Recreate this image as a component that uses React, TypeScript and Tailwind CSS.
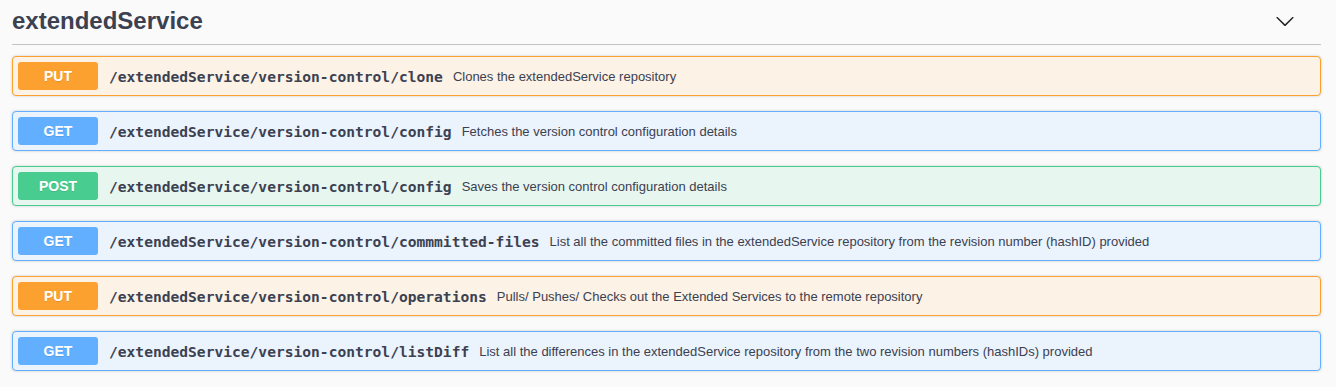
const ops = [
  { method: "PUT", path: "/extendedService/version-control/clone", desc: "Clones the extendedService repository" },
  { method: "GET", path: "/extendedService/version-control/config", desc: "Fetches the version control configuration details" },
  { method: "POST", path: "/extendedService/version-control/config", desc: "Saves the version control configuration details" },
  {
    method: "GET",
    path: "/extendedService/version-control/commmitted-files",
    desc: "List all the committed files in the extendedService repository from the revision number (hashID) provided",
  },
  {
    method: "PUT",
    path: "/extendedService/version-control/operations",
    desc: "Pulls/ Pushes/ Checks out the Extended Services to the remote repository",
  },
  {
    method: "GET",
    path: "/extendedService/version-control/listDiff",
    desc: "List all the differences in the extendedService repository from the two revision numbers (hashIDs) provided",
  },
];

const styles: Record<string, { block: string; badge: string }> = {
  PUT: { block: "bg-[#fcf2e6] border-[#fca130]", badge: "bg-[#fca130]" },
  GET: { block: "bg-[#ebf3fc] border-[#61affe]", badge: "bg-[#61affe]" },
  POST: { block: "bg-[#e8f6f0] border-[#49cc90]", badge: "bg-[#49cc90]" },
};

function OpBlock({ method, path, desc }: { method: string; path: string; desc: string }) {
  const s = styles[method];
  return (
    <div className={`mb-[15px] rounded-[4px] border shadow-[0_0_3px_rgba(0,0,0,0.19)] ${s.block}`}>
      <div className="flex items-center p-[5px]">
        <span
          className={`flex h-[28px] w-[80px] items-center justify-center rounded-[3px] text-[14px] font-bold text-white [text-shadow:0_1px_0_rgba(0,0,0,0.1)] ${s.badge}`}
        >
          {method}
        </span>
        <span className="pl-[11px] pr-[10px] pt-[1px] font-['DejaVu_Sans_Mono',monospace] text-[14.6px] font-bold text-[#3b4151]">
          {path}
        </span>
        <span className="pt-[2px] text-[13px] text-[#3b4151]">{desc}</span>
      </div>
    </div>
  );
}

export default function App() {
  return (
    <div className="min-h-[387px] w-[1336px] bg-[#fafafa] pl-[12px] pr-[15px] font-['Liberation_Sans',Arial,sans-serif]">
      {/* Tag header */}
      <div className="flex h-[45px] items-center justify-between border-b border-[rgba(59,65,81,0.3)]">
        <h3 className="text-[24px] font-bold leading-none text-[#3b4151] -mt-[2px]">extendedService</h3>
        <svg width="20" height="20" viewBox="0 0 20 20" className="mr-[26px] -mt-[3px]" fill="#222">
          <path d="M17.418 6.109c.272-.268.709-.268.979 0s.271.701 0 .969l-7.908 7.83c-.27.268-.707.268-.979 0l-7.908-7.83c-.27-.268-.27-.701 0-.969.271-.268.709-.268.979 0L10 13.25l7.418-7.141z" />
        </svg>
      </div>
      <div className="pt-[11px]">
        {ops.map((op, i) => (
          <OpBlock key={i} {...op} />
        ))}
      </div>
    </div>
  );
}
